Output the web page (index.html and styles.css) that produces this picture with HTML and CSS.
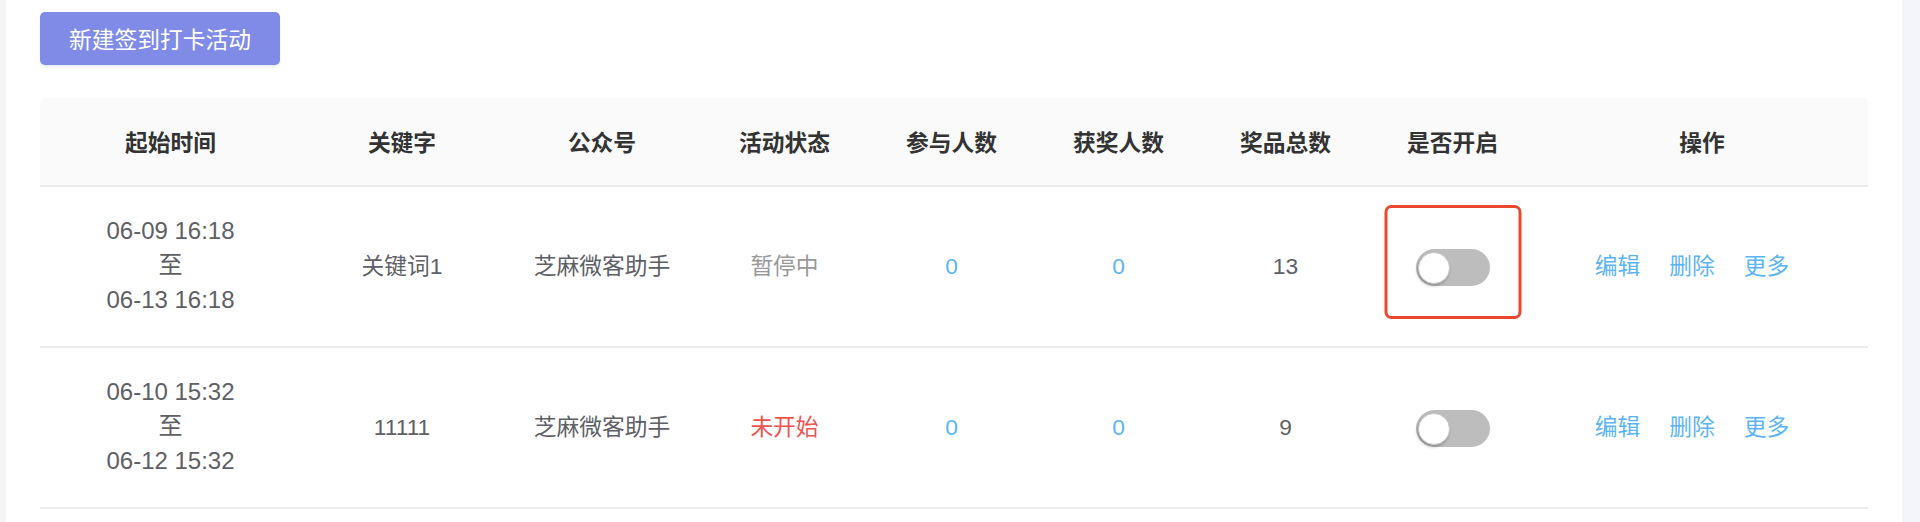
FILE: index.html
```html
<!DOCTYPE html>
<html lang="zh-CN">
<head>
    <meta charset="UTF-8">
    <meta name="viewport" content="width=device-width, initial-scale=1.0">
    <title>签到打卡活动</title>
    <link rel="stylesheet" href="styles.css">
</head>
<body>

    <div class="page">
        <div class="panel">
            <button class="btn-primary">新建签到打卡活动</button>

            <table class="activity-table">
                <colgroup>
                    <col style="width: 261px">
                    <col style="width: 202px">
                    <col style="width: 198px">
                    <col style="width: 167px">
                    <col style="width: 167px">
                    <col style="width: 167px">
                    <col style="width: 167px">
                    <col style="width: 167px">
                    <col>
                </colgroup>
                <thead>
                    <tr>
                        <th>起始时间</th>
                        <th>关键字</th>
                        <th>公众号</th>
                        <th>活动状态</th>
                        <th>参与人数</th>
                        <th>获奖人数</th>
                        <th>奖品总数</th>
                        <th>是否开启</th>
                        <th>操作</th>
                    </tr>
                </thead>
                <tbody>
                    <tr>
                        <td>
                            <div class="period">
                                <span>06-09 16:18</span>
                                <span>至</span>
                                <span>06-13 16:18</span>
                            </div>
                        </td>
                        <td>关键词1</td>
                        <td>芝麻微客助手</td>
                        <td class="status-paused">暂停中</td>
                        <td class="num-link">0</td>
                        <td class="num-link">0</td>
                        <td>13</td>
                        <td>
                            <div class="switch-wrap">
                                <span class="switch"><span class="knob"></span></span>
                                <span class="highlight"></span>
                            </div>
                        </td>
                        <td>
                            <div class="actions">
                                <a href="#">编辑</a>
                                <a href="#">删除</a>
                                <a href="#">更多</a>
                            </div>
                        </td>
                    </tr>
                    <tr>
                        <td>
                            <div class="period">
                                <span>06-10 15:32</span>
                                <span>至</span>
                                <span>06-12 15:32</span>
                            </div>
                        </td>
                        <td>11111</td>
                        <td>芝麻微客助手</td>
                        <td class="status-pending">未开始</td>
                        <td class="num-link">0</td>
                        <td class="num-link">0</td>
                        <td>9</td>
                        <td>
                            <div class="switch-wrap">
                                <span class="switch"><span class="knob"></span></span>
                            </div>
                        </td>
                        <td>
                            <div class="actions">
                                <a href="#">编辑</a>
                                <a href="#">删除</a>
                                <a href="#">更多</a>
                            </div>
                        </td>
                    </tr>
                </tbody>
            </table>
        </div>
    </div>

</body>
</html>
```

FILE: styles.css
```css
body {
    margin: 0;
    background-color: #f4f5fb;
    font-family: "Liberation Sans", "Noto Sans CJK SC", sans-serif;
    font-size: 22.75px;
    color: #5e6066;
}
.page { padding: 0 18px 0 6px; }
.panel { background: #fff; padding: 12px 34px 12px; min-height: 498px; }

.btn-primary {
    display: block;
    height: 53px;
    padding: 0 29px;
    border: none;
    border-radius: 5px;
    background-color: #7f8be6;
    color: #fff;
    font-family: "Noto Sans CJK SC", sans-serif;
    font-size: 22.75px;
    box-shadow: 0 2px 3px rgba(0,0,0,0.08);
    cursor: pointer;
}

.activity-table {
    width: 1828px;
    margin-top: 33px;
    table-layout: fixed;
    border-collapse: separate;
    border-spacing: 0;
}
.activity-table th {
    height: 87px;
    padding: 0;
    background: #fafafa;
    border-bottom: 2px solid #ebebeb;
    color: #333;
    font-family: "Noto Sans CJK SC", sans-serif;
    font-weight: 700;
    text-align: center;
}
.activity-table th:first-child { border-top-left-radius: 5px; }
.activity-table th:last-child { border-top-right-radius: 5px; }
.activity-table td {
    height: 159px;
    padding: 0;
    border-bottom: 2px solid #ebebeb;
    text-align: center;
    line-height: 1.2;
}

.period { display: flex; flex-direction: column; align-items: center; font-size: 24px; line-height: 34.5px; margin-top: -2px; }
.status-paused { color: #999; }
.status-pending { color: #f0524f; }
.num-link { color: #5bb5f5; }

.switch-wrap { position: relative; display: inline-flex; vertical-align: middle; margin-top: 2px; }
.switch {
    position: relative;
    display: inline-block;
    width: 74px;
    height: 37px;
    border-radius: 19px;
    background: #bdbdbd;
}
.switch .knob {
    position: absolute;
    left: 2px;
    top: 3px;
    width: 30px;
    height: 30px;
    border-radius: 50%;
    background: #fff;
    border: 1px solid #c8c8c8;
    box-shadow: -1px 2px 3px rgba(0,0,0,0.25);
}
.highlight {
    position: absolute;
    left: 50%;
    top: 50%;
    width: 131px;
    height: 108px;
    transform: translate(-50%, calc(-50% - 6px));
    border: 3px solid #e9482f;
    border-radius: 7px;
}

.actions { display: flex; justify-content: center; gap: 29px; padding-right: 20px; }
.actions a { color: #5bb5f5; text-decoration: none; }
```
